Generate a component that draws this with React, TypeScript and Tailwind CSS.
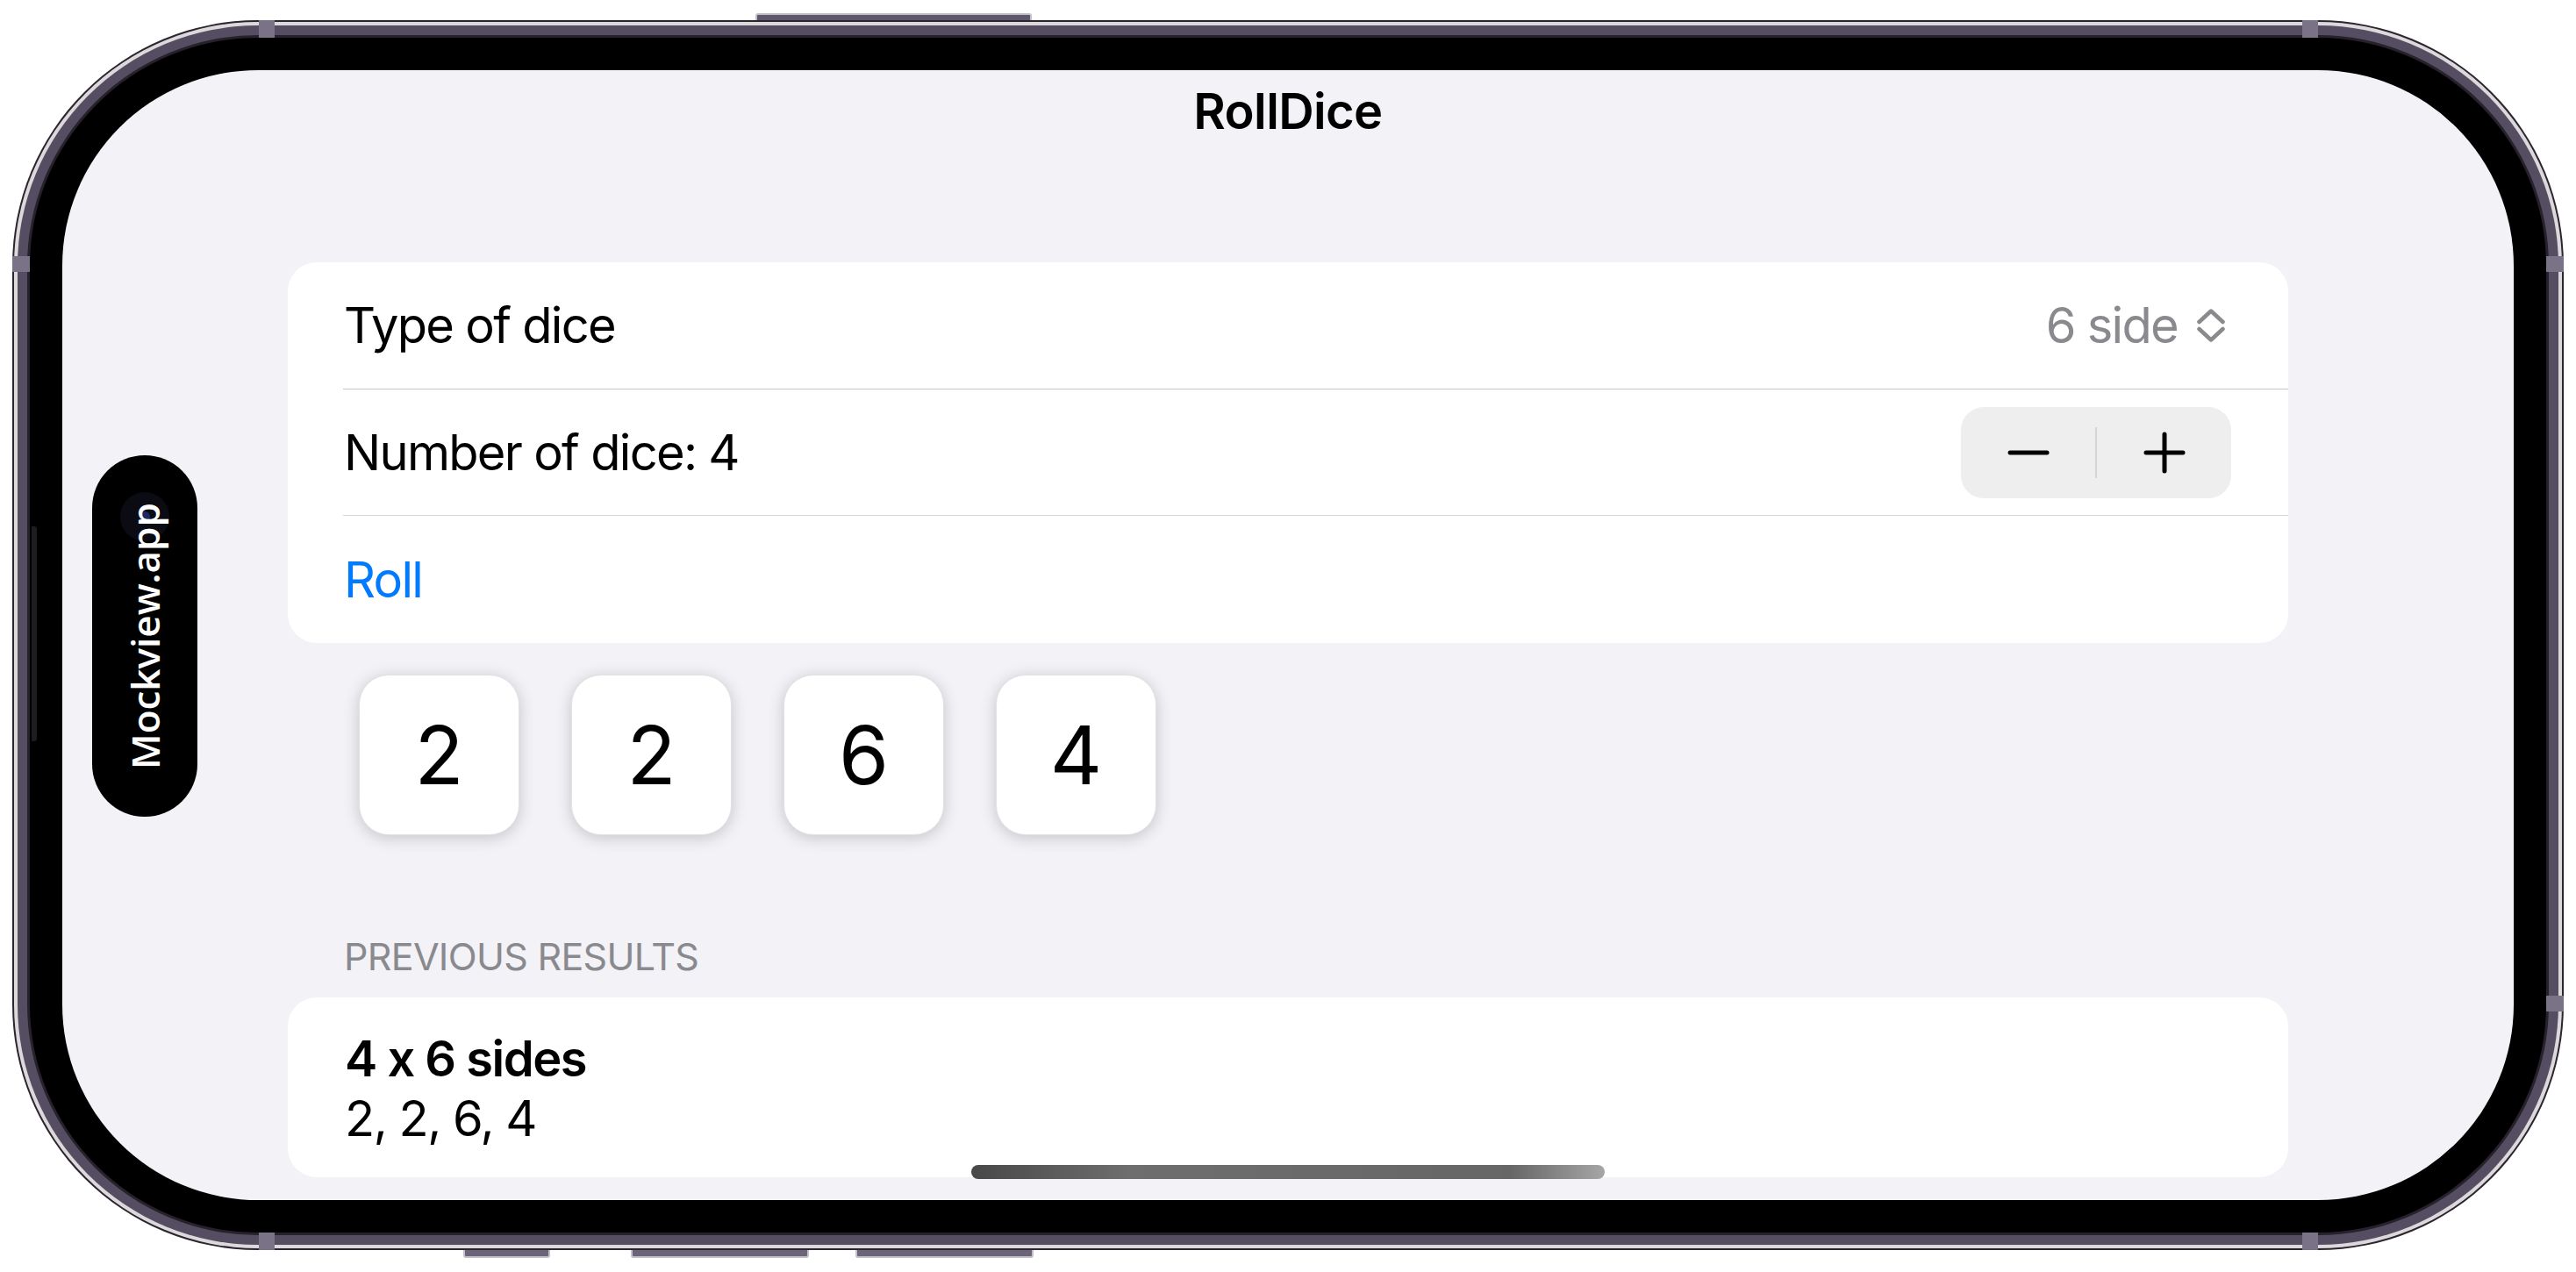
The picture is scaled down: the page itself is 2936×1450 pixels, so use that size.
import React from "react";

const dice = [2, 2, 6, 4];

function ChevronUpDown() {
  return (
    <svg
      width="34"
      height="38"
      viewBox="0 0 34 38"
      fill="none"
      stroke="#8a8a8e"
      strokeWidth={4.5}
      strokeLinecap="round"
      strokeLinejoin="round"
      aria-hidden
    >
      <path d="M3.5 15 17 2.5 30.5 15" />
      <path d="M3.5 23 17 35.5 30.5 23" />
    </svg>
  );
}

function Stepper() {
  return (
    <div className="flex h-[104px] w-[308px] items-center rounded-[26px] bg-[#eeeeef]">
      <div className="flex flex-1 items-center justify-center">
        <svg width="48" height="6" viewBox="0 0 48 6" aria-hidden>
          <path d="M3 3h42" stroke="#000" strokeWidth={5} strokeLinecap="round" />
        </svg>
      </div>
      <div className="h-[58px] w-[2px] bg-[#d4d4d8]" />
      <div className="flex flex-1 items-center justify-center">
        <svg width="48" height="48" viewBox="0 0 48 48" aria-hidden>
          <path
            d="M3 24h42M24 3v42"
            stroke="#000"
            strokeWidth={5}
            strokeLinecap="round"
          />
        </svg>
      </div>
    </div>
  );
}

function Screen() {
  return (
    <div className="relative h-full overflow-hidden rounded-[223px] bg-[#f2f2f7] font-['Inter','Liberation_Sans',sans-serif] text-black antialiased">
      {/* nav title */}
      <div className="pt-[13px] text-center text-[56px] leading-[68px] font-semibold tracking-[-0.6px]">
        RollDice
      </div>

      <div className="mx-auto mt-[138px] w-[2280px]">
        {/* settings card */}
        <div className="rounded-[33px] bg-white text-[56px] leading-[68px] tracking-[-1.7px]">
          <div className="flex h-[144px] items-center justify-between pr-[71px] pl-[64px]">
            <span>Type of dice</span>
            <div className="flex items-center gap-[21px] text-[#8a8a8e]">
              <span>6 side</span>
              <ChevronUpDown />
            </div>
          </div>
          <div className="ml-[63px] h-px bg-[#c6c6c8]" />
          <div className="flex h-[143px] items-center justify-between pr-[65px] pl-[64px]">
            <span>Number of dice: 4</span>
            <Stepper />
          </div>
          <div className="ml-[63px] h-px bg-[#d8d8dc]" />
          <div className="flex h-[145px] items-center pl-[64px]">
            <span className="text-[#007aff]">Roll</span>
          </div>
        </div>

        {/* dice */}
        <div className="mt-[36px] flex gap-[59px] pl-[81px]">
          {dice.map((d, i) => (
            <div
              key={i}
              className="flex h-[183px] w-[183px] items-center justify-center rounded-[34px] border border-[#e2e2e6] bg-white text-[92px] leading-none shadow-[0_3px_18px_rgba(0,0,0,0.19)]"
            >
              {d}
            </div>
          ))}
        </div>

        {/* history */}
        <div className="mt-[112px] pl-[64px] text-[43px] leading-[52px] tracking-[-0.7px] text-[#8a8a8e]">
          PREVIOUS RESULTS
        </div>
        <div className="mt-[21px] rounded-[33px] bg-white pt-[36px] pb-[33px] pl-[65px] text-[56px] leading-[68px] tracking-[-1.5px]">
          <div className="font-semibold">4 x 6 sides</div>
          <div>2, 2, 6, 4</div>
        </div>
      </div>

      {/* dynamic island */}
      <div className="absolute top-[439px] left-[34px] flex h-[412px] w-[120px] items-center justify-center rounded-full bg-black">
        <div className="absolute top-[42px] left-[32px] h-[56px] w-[56px] rounded-full bg-[#0b0b13]">
          <div className="mx-auto mt-[22px] h-[12px] w-[12px] rounded-full bg-[#1c2a66]" />
        </div>
        <div className="relative -rotate-90 font-['Open_Sans',sans-serif] text-[44px] leading-none font-semibold whitespace-nowrap text-white">
          Mockview.app
        </div>
      </div>

      {/* home indicator */}
      <div className="absolute bottom-[24px] left-1/2 h-[16px] w-[722px] -translate-x-1/2 rounded-full bg-[linear-gradient(90deg,#484848,#6e6e6e_25%,#666666_85%,#a6a6a6)]" />
    </div>
  );
}

export default function App() {
  return (
    <div className="relative h-[1450px] w-[2936px] overflow-hidden bg-white">
      {/* hardware buttons */}
      <div className="absolute top-[15px] left-[861px] h-[14px] w-[315px] rounded-[3px] border-2 border-[#c4bfc8] bg-[#5f576c]" />
      <div className="absolute top-[1418px] left-[528px] flex gap-[92px]">
        <div className="h-[16px] w-[99px] rounded-[3px] border-2 border-[#c4bfc8] bg-[#6c6479]" />
        <div className="-ml-[0px] flex gap-[53px]">
          <div className="h-[16px] w-[203px] rounded-[3px] border-2 border-[#c4bfc8] bg-[#6c6479]" />
          <div className="h-[16px] w-[203px] rounded-[3px] border-2 border-[#c4bfc8] bg-[#6c6479]" />
        </div>
      </div>

      {/* phone */}
      <div className="relative mt-[23px] ml-[14px] h-[1402px] w-[2908px] rounded-[280px] bg-[#2a2530] p-[2px]">
        <div className="h-full rounded-[278px] bg-[#ddd8da] p-[4px]">
          <div className="h-full rounded-[274px] bg-[#554d61] p-[11px]">
            <div className="h-full rounded-[263px] bg-[#26212b] p-[3px]">
              <div className="h-full rounded-[260px] bg-black p-[37px]">
                <Screen />
              </div>
            </div>
          </div>
        </div>
      </div>

      {/* antenna bands and side switch */}
      <div className="absolute top-[23px] left-[295px] h-[20px] w-[18px] bg-[#7a7287]" />
      <div className="absolute top-[23px] left-[2624px] h-[20px] w-[18px] bg-[#7a7287]" />
      <div className="absolute top-[1405px] left-[295px] h-[20px] w-[18px] bg-[#7a7287]" />
      <div className="absolute top-[1405px] left-[2624px] h-[20px] w-[18px] bg-[#7a7287]" />
      <div className="absolute top-[292px] left-[14px] h-[18px] w-[20px] bg-[#7a7287]" />
      <div className="absolute top-[292px] left-[2902px] h-[18px] w-[20px] bg-[#7a7287]" />
      <div className="absolute top-[1135px] left-[2902px] h-[18px] w-[20px] bg-[#7a7287]" />
      <div className="absolute top-[600px] left-[36px] h-[245px] w-[6px] rounded-r-[3px] bg-[#1d1d20]" />
    </div>
  );
}
